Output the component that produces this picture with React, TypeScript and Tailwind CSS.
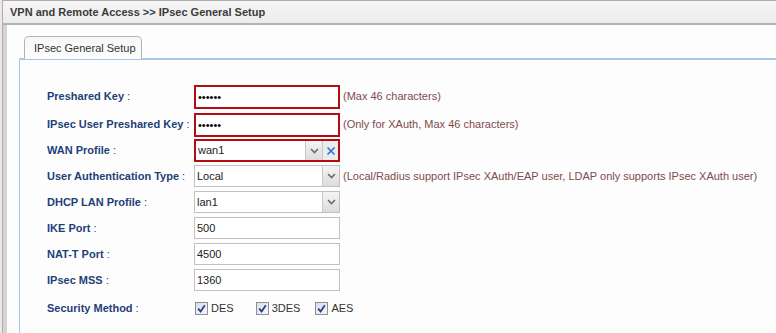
const rows = [
  { label: 'Preshared Key', kind: 'password', value: '••••••', hint: '(Max 46 characters)', error: true },
  { label: 'IPsec User Preshared Key', kind: 'password', value: '••••••', hint: '(Only for XAuth, Max 46 characters)', error: true },
  { label: 'WAN Profile', kind: 'wan', value: 'wan1', error: true },
  { label: 'User Authentication Type', kind: 'select', value: 'Local', hint: '(Local/Radius support IPsec XAuth/EAP user, LDAP only supports IPsec XAuth user)' },
  { label: 'DHCP LAN Profile', kind: 'select', value: 'lan1' },
  { label: 'IKE Port', kind: 'text', value: '500' },
  { label: 'NAT-T Port', kind: 'text', value: '4500' },
  { label: 'IPsec MSS', kind: 'text', value: '1360' },
];

function Chevron() {
  return (
    <svg width="9" height="6" viewBox="0 0 9 6">
      <path d="M1 1 L4.5 4.5 L8 1" fill="none" stroke="#6b6b6b" strokeWidth="1.6" />
    </svg>
  );
}

function ArrowButton() {
  return (
    <div className="w-[17px] self-stretch flex items-center justify-center border-l border-[#c8c8c8] bg-gradient-to-b from-[#f4f4f4] to-[#dcdcdc]">
      <Chevron />
    </div>
  );
}

function Checkbox({ label, className }: { label: string; className?: string }) {
  return (
    <div className={`flex items-center gap-[3px] ${className ?? ''}`}>
      <div className="w-[13px] h-[13px] border border-[#8e8f8f] bg-gradient-to-br from-[#d9dfe9] to-[#f5f7fa] flex items-center justify-center">
        <svg width="9" height="9" viewBox="0 0 9 9">
          <path d="M1.2 4.6 L3.6 7.4 L7.8 1.2" fill="none" stroke="#2c3f8c" strokeWidth="1.8" />
        </svg>
      </div>
      <span className="text-[#333]">{label}</span>
    </div>
  );
}

function Field({ row }: { row: (typeof rows)[number] }) {
  const frame = row.error ? 'border-2 border-[#b10d12]' : 'border border-[#c0c0c0]';
  if (row.kind === 'wan') {
    return (
      <div className={`w-[146px] h-[23px] flex bg-white ${frame}`}>
        <div className="flex-1 flex items-center pl-[2px] text-[#222]">{row.value}</div>
        <ArrowButton />
        <div className="w-[16px] flex items-center justify-center border-l border-[#c8c8c8] bg-[#ececec]">
          <svg width="10" height="10" viewBox="0 0 10 10">
            <path d="M1.5 1.5 L8.5 8.5 M8.5 1.5 L1.5 8.5" stroke="#2b6fe0" strokeWidth="1.6" />
          </svg>
        </div>
      </div>
    );
  }
  if (row.kind === 'select') {
    return (
      <div className={`w-[146px] h-[22px] flex bg-white ${frame}`}>
        <div className="flex-1 flex items-center pl-[2px] text-[#222]">{row.value}</div>
        <ArrowButton />
      </div>
    );
  }
  return (
    <div className={`w-[146px] ${row.error ? 'h-[24px]' : 'h-[22px]'} flex items-center bg-white ${frame} pl-[2px]`}>
      {row.kind === 'password' ? (
        <span className="text-[11px] text-black">{row.value}</span>
      ) : (
        <span className="text-[#222]">{row.value}</span>
      )}
    </div>
  );
}

export default function App() {
  return (
    <div className="w-[776px] h-[333px] overflow-hidden bg-[#f1e6e6] pl-[2px] font-['Liberation_Sans',Arial,sans-serif] text-[11px]">
      <div className="h-full flex flex-col border-l border-t border-[#aeaeae] bg-[#fdfdfd]">
        {/* Title bar */}
        <div className="h-[24px] shrink-0 flex items-center px-[7px] bg-gradient-to-b from-[#f6f6f6] to-[#ebebeb] border-b-2 border-[#b4b4b4] font-bold text-[#3b3b3b]">
          VPN and Remote Access &gt;&gt; IPsec General Setup
        </div>

        <div className="flex-1 flex border-l-[4px] border-[#d5d5d5]">
          <div className="flex-1 pl-[12px] pt-[11px]">
            {/* Tab */}
            <div className="flex pl-[5px]">
              <div className="relative z-10 -mb-[1px] w-[118px] h-[23px] flex items-center pl-[9px] rounded-t-[5px] border border-b-0 border-[#b3b3b3] bg-gradient-to-b from-[#f7f7f7] to-[#fdfdfd] text-[#333]">
                IPsec General Setup
              </div>
            </div>

            {/* Panel */}
            <div className="h-full border-t-2 border-l border-[#a8c6f0] pl-[27px] pt-[25px]">
              {rows.map((row, i) => (
                <div key={row.label} className={`flex items-start ${i === 0 ? 'h-[28px]' : 'h-[26px]'}`}>
                  <div className="w-[147px] h-[22px] flex items-center text-[#1f3f78]">
                    <span className="font-bold">{row.label}</span>
                    <span className="ml-[3px]">:</span>
                  </div>
                  <Field row={row} />
                  {row.hint && (
                    <div className="h-[22px] flex items-center ml-[3px] text-[#7d4b4b]">{row.hint}</div>
                  )}
                </div>
              ))}
              <div className="flex items-center h-[26px]">
                <div className="w-[148px] text-[#1f3f78]">
                  <span className="font-bold">Security Method</span>
                  <span className="ml-[3px]">:</span>
                </div>
                <div className="flex">
                  <Checkbox label="DES" />
                  <Checkbox label="3DES" className="ml-[22px]" />
                  <Checkbox label="AES" className="ml-[15px]" />
                </div>
              </div>
            </div>
          </div>
        </div>
      </div>
    </div>
  );
}
